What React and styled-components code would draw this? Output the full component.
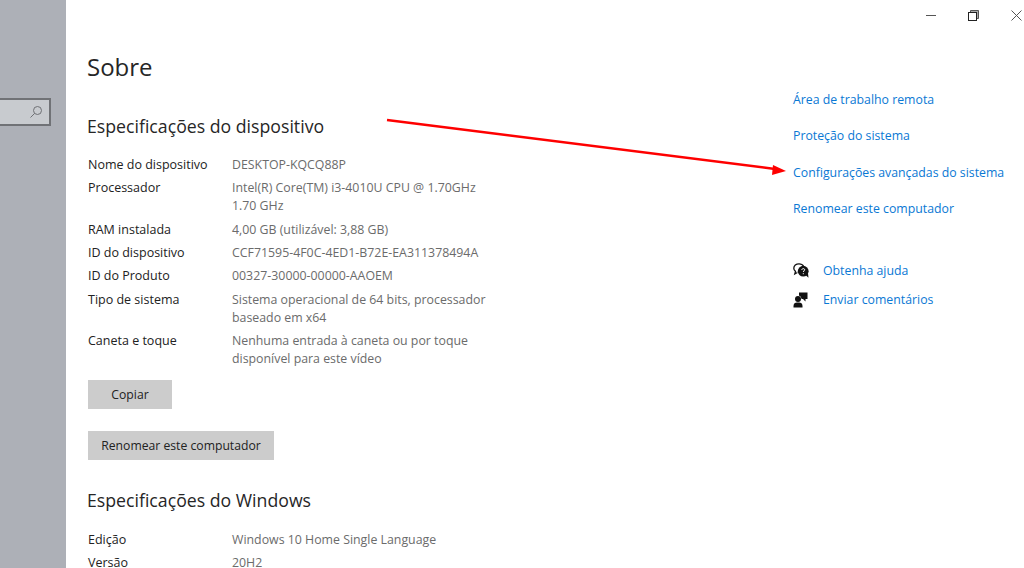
import React from 'react';
import styled, { createGlobalStyle } from 'styled-components';

const GlobalStyle = createGlobalStyle`
    html, body {
        margin: 0;
        height: 100%;
        overflow: hidden;
        background: white;
        font-family: "Open Sans", "Noto Sans", sans-serif;
    }
`;

const Page = styled.div`
    position: relative;
    display: flex;
    width: 1024px;
    height: 568px;
    overflow: hidden;
`;

const Sidebar = styled.div`
    width: 66px;
    flex: none;
    padding-top: 98px;
    box-sizing: border-box;
    background: #adb0b7;
`;

const SearchBox = styled.div`
    width: 51px;
    height: 28px;
    box-sizing: border-box;
    display: flex;
    align-items: center;
    justify-content: flex-end;
    padding-right: 6px;
    background: #c8cbcf;
    border: 2px solid #707276;
    border-left: none;
    color: #6f7175;
`;

const Main = styled.div`
    flex: 1;
    display: flex;
    flex-direction: column;
    min-width: 0;
`;

const TitleBar = styled.div`
    height: 30px;
    flex: none;
    display: flex;
    justify-content: flex-end;
    align-items: center;
    margin-right: -14px;
    color: #555;
`;

const WindowButton = styled.div`
    width: 43px;
    height: 30px;
    display: flex;
    align-items: center;
    justify-content: center;
`;

const Columns = styled.div`
    flex: 1;
    display: flex;
    justify-content: space-between;
`;

const Content = styled.div`
    padding-left: 21px;
`;

const Title = styled.h1`
    margin: 18px 0 0;
    font-size: 24px;
    line-height: 38px;
    font-weight: 400;
    color: #262626;
`;

const SectionTitle = styled.h2`
    margin: ${p => p.$top}px 0 0;
    font-size: 17.7px;
    line-height: 26px;
    font-weight: 400;
    color: #262626;
`;

const SpecList = styled.dl`
    margin: ${p => p.$top}px 0 0 1px;
    display: grid;
    grid-template-columns: 144px 262px;
    row-gap: 5.33px;
    line-height: 18px;
`;

const SpecLabel = styled.dt`
    font-size: 12.5px;
    color: #222;
`;

const SpecValue = styled.dd`
    margin: 0;
    font-size: 12.35px;
    color: #6b6b6b;
`;

const Button = styled.div`
    width: ${p => p.$width}px;
    height: 29px;
    margin: ${p => p.$top}px 0 0 1px;
    display: flex;
    align-items: center;
    justify-content: center;
    background: #cccccc;
    color: #222;
    font-size: 12.2px;
`;

const Aside = styled.div`
    width: 231px;
    flex: none;
    padding-top: 61px;
    box-sizing: border-box;
`;

const LinkList = styled.div`
    display: flex;
    flex-direction: column;
    gap: 18.4px;
`;

const BlueLink = styled.a`
    font-size: 12.3px;
    line-height: 18px;
    color: #0a78d4;
    white-space: nowrap;
`;

const HelpList = styled.div`
    margin-top: 44px;
    display: flex;
    flex-direction: column;
    gap: 11px;
`;

const HelpRow = styled.div`
    display: flex;
    align-items: center;
    height: 18px;
`;

const HelpIconBox = styled.span`
    width: 30px;
    flex: none;
    display: flex;
    align-items: center;
`;

const ArrowLayer = styled.svg`
    position: absolute;
    left: 0;
    top: 0;
    pointer-events: none;
`;

const deviceSpecs = [
    ['Nome do dispositivo', 'DESKTOP-KQCQ88P'],
    ['Processador', <>Intel(R) Core(TM) i3-4010U CPU @ 1.70GHz<br />1.70 GHz</>],
    ['RAM instalada', '4,00 GB (utilizável: 3,88 GB)'],
    ['ID do dispositivo', 'CCF71595-4F0C-4ED1-B72E-EA311378494A'],
    ['ID do Produto', '00327-30000-00000-AAOEM'],
    ['Tipo de sistema', <>Sistema operacional de 64 bits, processador<br />baseado em x64</>],
    ['Caneta e toque', <>Nenhuma entrada à caneta ou por toque<br />disponível para este vídeo</>],
];

const windowsSpecs = [
    ['Edição', 'Windows 10 Home Single Language'],
    ['Versão', '20H2'],
];

const relatedLinks = [
    'Área de trabalho remota',
    'Proteção do sistema',
    'Configurações avançadas do sistema',
    'Renomear este computador',
];

const Specs = ({ items, top }) => (
    <SpecList $top={top}>
        {items.map(([label, value]) => (
            <React.Fragment key={label}>
                <SpecLabel>{label}</SpecLabel>
                <SpecValue>{value}</SpecValue>
            </React.Fragment>
        ))}
    </SpecList>
);

const SearchIcon = () => (
    <svg width="14" height="14" viewBox="0 0 14 14" fill="none" stroke="currentColor">
        <circle cx="8.5" cy="5.5" r="4" />
        <path d="M5.6 8.4L1.5 12.5" />
    </svg>
);

const HelpIcon = () => (
    <svg width="17" height="16" viewBox="0 0 17 16">
        <path d="M6 .8C3 .8.8 2.800.8 5.200c0 1.300.6 2.400 1.700 3.200L1.800 11l2.600-1.500" fill="none" stroke="#111" strokeWidth="1.3" />
        <path d="M6 .8c2 0 3.800 1 4.600 2.400" fill="none" stroke="#111" strokeWidth="1.3" />
        <circle cx="10.200" cy="8.200" r="5.400" fill="#111" />
        <path d="M12.500 12l3 2.800-.6-5z" fill="#111" />
        <path d="M8.800 7c.1-1 .7-1.400 1.500-1.400.9 0 1.400.5 1.400 1.200 0 1-1.400 1.100-1.400 2.200" fill="none" stroke="#fff" strokeWidth="1" />
        <rect x="9.800" y="10.200" width="1" height="1" fill="#fff" />
    </svg>
);

const FeedbackIcon = () => (
    <svg width="15" height="16" viewBox="0 0 15 16" fill="#111">
        <path d="M6 .5h8.500v6.500h-2v2.400L10 7H8.600A4.600 4.600 0 0 0 6 3.600z" />
        <circle cx="5" cy="7" r="3" />
        <path d="M.5 15.500v-1.600C.5 11.700 2 10.500 4 10.500h2c2 0 3.500 1.200 3.500 3.400v1.600z" />
    </svg>
);

const App = () => {
    return (
        <>
            <GlobalStyle />
            <Page>
                <Sidebar>
                    <SearchBox>
                        <SearchIcon />
                    </SearchBox>
                </Sidebar>
                <Main>
                    <TitleBar>
                        <WindowButton>
                            <svg width="10" height="10" viewBox="0 0 10 10" fill="none" stroke="currentColor">
                                <path d="M0 5.500h10" />
                            </svg>
                        </WindowButton>
                        <WindowButton>
                            <svg width="11" height="11" viewBox="0 0 11 11" fill="none" stroke="currentColor">
                                <path d="M2.500 2.500v-2h8v8h-2v-6z" fill="#aaa" />
                                <rect x="0.500" y="2.500" width="8" height="8" fill="#fff" stroke="#222" />
                            </svg>
                        </WindowButton>
                        <WindowButton>
                            <svg width="11" height="11" viewBox="0 0 11 11" fill="none" stroke="currentColor">
                                <path d="M.5.5l10 10M10.500.5l-10 10" />
                            </svg>
                        </WindowButton>
                    </TitleBar>
                    <Columns>
                        <Content>
                            <Title>Sobre</Title>
                            <SectionTitle $top={27}>Especificações do dispositivo</SectionTitle>
                            <Specs items={deviceSpecs} top={17} />
                            <Button $width={84} $top={12}>Copiar</Button>
                            <Button $width={186} $top={22}>Renomear este computador</Button>
                            <SectionTitle $top={27}>Especificações do Windows</SectionTitle>
                            <Specs items={windowsSpecs} top={18} />
                        </Content>
                        <Aside>
                            <LinkList>
                                {relatedLinks.map(text => (
                                    <BlueLink key={text}>{text}</BlueLink>
                                ))}
                            </LinkList>
                            <HelpList>
                                <HelpRow>
                                    <HelpIconBox><HelpIcon /></HelpIconBox>
                                    <BlueLink>Obtenha ajuda</BlueLink>
                                </HelpRow>
                                <HelpRow>
                                    <HelpIconBox><FeedbackIcon /></HelpIconBox>
                                    <BlueLink>Enviar comentários</BlueLink>
                                </HelpRow>
                            </HelpList>
                        </Aside>
                    </Columns>
                </Main>
                <ArrowLayer width="1024" height="568" viewBox="0 0 1024 568">
                    <path d="M387 120L775 169" stroke="#fe0000" strokeWidth="2.500" fill="none" />
                    <path d="M786 171L773 165L772 175z" fill="#fe0000" />
                </ArrowLayer>
            </Page>
        </>
    );
};

export default App;
